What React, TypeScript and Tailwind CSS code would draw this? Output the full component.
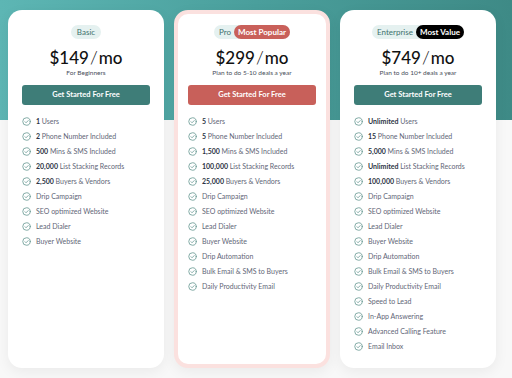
type Feature = { bold?: string; text: string };

type Plan = {
  name: string;
  tag?: { label: string; className: string };
  price: string;
  note: string;
  button: string;
  highlight?: boolean;
  features: Feature[];
};

const common: Feature[] = [
  { text: "Drip Campaign" },
  { text: "SEO optimized Website" },
  { text: "Lead Dialer" },
  { text: "Buyer Website" },
];

const PLANS: Plan[] = [
  {
    name: "Basic",
    price: "$149",
    note: "For Beginners",
    button: "bg-[#3e7d78]",
    features: [
      { bold: "1", text: "Users" },
      { bold: "2", text: "Phone Number Included" },
      { bold: "500", text: "Mins & SMS Included" },
      { bold: "20,000", text: "List Stacking Records" },
      { bold: "2,500", text: "Buyers & Vendors" },
      ...common,
    ],
  },
  {
    name: "Pro",
    tag: { label: "Most Popular", className: "bg-[#c9605a]" },
    price: "$299",
    note: "Plan to do 5-10 deals a year",
    button: "bg-[#c8605a]",
    highlight: true,
    features: [
      { bold: "5", text: "Users" },
      { bold: "5", text: "Phone Number Included" },
      { bold: "1,500", text: "Mins & SMS Included" },
      { bold: "100,000", text: "List Stacking Records" },
      { bold: "25,000", text: "Buyers & Vendors" },
      ...common,
      { text: "Drip Automation" },
      { text: "Bulk Email & SMS to Buyers" },
      { text: "Daily Productivity Email" },
    ],
  },
  {
    name: "Enterprise",
    tag: { label: "Most Value", className: "bg-black" },
    price: "$749",
    note: "Plan to do 10+ deals a year",
    button: "bg-[#3e7d78]",
    features: [
      { bold: "Unlimited", text: "Users" },
      { bold: "15", text: "Phone Number Included" },
      { bold: "5,000", text: "Mins & SMS Included" },
      { bold: "Unlimited", text: "List Stacking Records" },
      { bold: "100,000", text: "Buyers & Vendors" },
      ...common,
      { text: "Drip Automation" },
      { text: "Bulk Email & SMS to Buyers" },
      { text: "Daily Productivity Email" },
      { text: "Speed to Lead" },
      { text: "In-App Answering" },
      { text: "Advanced Calling Feature" },
      { text: "Email Inbox" },
    ],
  },
];

function Check() {
  return (
    <svg width="9" height="9" viewBox="0 0 24 24" fill="none" stroke="#6a9a94" strokeWidth="2.2" strokeLinecap="round" strokeLinejoin="round" className="shrink-0">
      <circle cx="12" cy="12" r="10" />
      <path d="m8 12.5 2.8 2.8L16.5 9.5" />
    </svg>
  );
}

function PlanCard({ plan }: { plan: Plan }) {
  return (
    <div
      className={
        plan.highlight
          ? "flex w-[156px] flex-col items-stretch rounded-[14px] border-4 border-[#fbe1df] bg-white px-[10px] pt-[11px] shadow-[0_4px_14px_rgba(0,0,0,0.06)]"
          : "flex w-[156px] flex-col items-stretch rounded-[14px] bg-white px-[14px] pt-[15px] shadow-[0_4px_14px_rgba(0,0,0,0.06)]"
      }
    >
      <div className="flex justify-center">
        <div className="flex h-[14px] items-center rounded-full bg-[#e5f1f0] text-[8px] text-[#3f716d]">
          <span className={plan.tag ? "pl-[5px] pr-[3px]" : "px-[6px]"}>{plan.name}</span>
          {plan.tag && (
            <span className={`flex h-[14px] items-center rounded-full px-[4px] font-bold text-white ${plan.tag.className}`}>
              {plan.tag.label}
            </span>
          )}
        </div>
      </div>
      <div className="mt-[9px] h-[20px] text-center text-[17px] leading-[20px] font-medium text-[#111]">
        {plan.price}
        <span className="px-[1px] text-[18px] leading-none font-light">/</span>mo
      </div>
      <div className="text-center text-[6.5px] leading-[9px] text-[#4a4f5a]">{plan.note}</div>
      <div className={`mt-[8px] flex h-[20px] items-center justify-center rounded-[3px] text-[7.5px] font-bold text-white ${plan.button}`}>
        Get Started For Free
      </div>
      <ul className="mt-[9px] flex flex-col">
        {plan.features.map((f, i) => (
          <li key={i} className="flex h-[15px] items-center gap-[5px] text-[7px] text-[#5f6677]">
            <Check />
            <span>
              {f.bold && <b className="font-bold text-[#2c3444]">{f.bold} </b>}
              {f.text}
            </span>
          </li>
        ))}
      </ul>
    </div>
  );
}

export default function App() {
  return (
    <div className="relative h-[378px] w-[512px] overflow-hidden bg-[#f8f8f8] font-['Lato',sans-serif]">
      <div className="absolute inset-x-0 top-0 h-[120px] bg-gradient-to-r from-[#5db6b4] via-[#4a9f9c] to-[#3e8a86]" />
      <div className="relative flex h-full items-stretch gap-[10px] pt-[10px] pb-[10px] pl-[8px]">
        {PLANS.map((p) => (
          <PlanCard key={p.name} plan={p} />
        ))}
      </div>
    </div>
  );
}
